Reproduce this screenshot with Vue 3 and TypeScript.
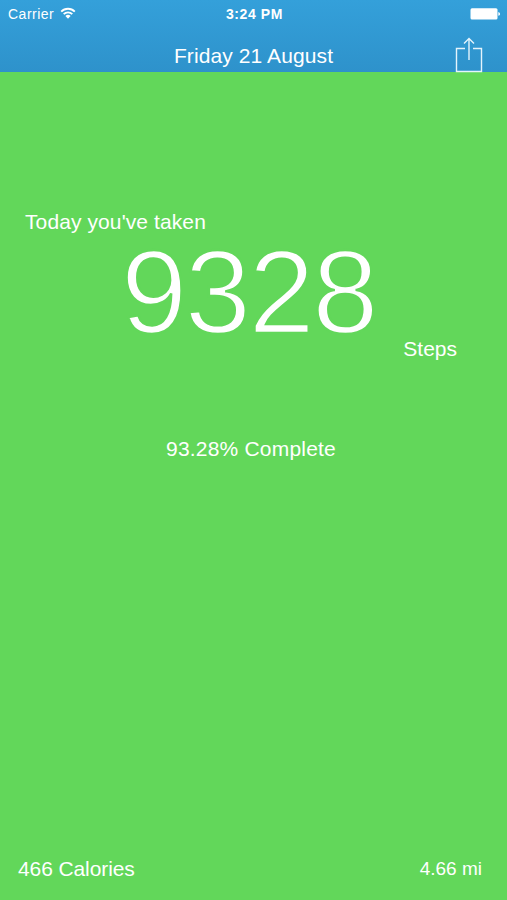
<script setup lang="ts">
const steps: number = 9328
const goal: number = 10000
const complete: string = ((steps / goal) * 100).toFixed(2)
</script>

<template>
  <main class="screen">
    <header class="header">
      <div class="status">
        <div class="carrier">
          <span>Carrier</span>
          <svg class="wifi" viewBox="0 0 16 12" width="16" height="12">
            <g fill="none" stroke="#fff" stroke-width="1.9">
              <path d="M1.2 4.6a9.6 9.6 0 0 1 13.6 0" />
              <path d="M3.7 7.1a6.1 6.1 0 0 1 8.6 0" />
            </g>
            <path d="M8 11.8 5.4 9a3.6 3.6 0 0 1 5.2 0z" fill="#fff" />
          </svg>
        </div>
        <span class="time">3:24 PM</span>
        <svg class="battery" viewBox="0 0 31 12" width="31" height="12">
          <rect x="0.5" y="0.2" width="27" height="11.4" rx="1.5" fill="#fff" />
          <path d="M28.3 4q1.8 .4 1.8 1.9t-1.8 1.9z" fill="#fff" />
        </svg>
      </div>
      <div class="nav">
        <h1 class="title">Friday 21 August</h1>
        <svg class="share" viewBox="0 0 28 36" width="28" height="36" fill="none" stroke="#e4f4fc" stroke-width="1.4">
          <path d="M10 11.5H1.5v23h25v-23H18" />
          <path d="M14 23V1.5M9 6.5l5-5 5 5" />
        </svg>
      </div>
    </header>
    <section class="body">
      <p class="intro">Today you've taken</p>
      <p class="count">{{ steps }}</p>
      <p class="unit">Steps</p>
      <p class="complete">{{ complete }}% Complete</p>
      <footer class="footer">
        <span class="calories">466 Calories</span>
        <span class="distance">4.66 mi</span>
      </footer>
    </section>
  </main>
</template>

<style>
body { margin: 0; }
</style>

<style scoped>
.screen { --green: #62d75a; width: 507px; height: 900px; display: flex; flex-direction: column; background: var(--green); color: #fff; font-family: "Liberation Sans", Arial, sans-serif; font-size: 21px; line-height: 26px; overflow: hidden; }
.header { height: 72px; box-sizing: border-box; background: linear-gradient(#34a0da, #2e92cb); }
.status { height: 28px; display: grid; grid-template-columns: 1fr auto 1fr; align-items: center; padding: 0 6px 0 8px; font-size: 14px; line-height: 28px; }
.carrier { display: flex; align-items: center; gap: 6px; letter-spacing: 0.5px; }
.wifi { margin-bottom: 2px; }
.time { font-weight: 700; letter-spacing: 0.6px; }
.battery { justify-self: end; }
.nav { height: 44px; display: grid; grid-template-columns: 1fr auto 1fr; padding: 0 24px; }
.title { grid-column: 2; margin: 0; padding-top: 15px; font-size: 21px; font-weight: 400; letter-spacing: 0.1px; }
.share { justify-self: end; margin-top: 9px; }
.body { flex: 1; display: flex; flex-direction: column; }
p { margin: 0; }
.intro { padding: 137px 25px 0; letter-spacing: 0.1px; }
/* The stroke takes the background colour to thin the numerals. */
.count { height: 101px; padding-right: 10px; text-align: center; font-size: 119px; line-height: 114px; letter-spacing: -2.4px; -webkit-text-stroke: 2.4px var(--green); }
.unit { padding-right: 50px; text-align: right; }
.complete { margin-top: 74px; padding-right: 5px; text-align: center; letter-spacing: 0.2px; }
.footer { margin-top: auto; display: flex; justify-content: space-between; padding: 0 25px 18px 18px; }
.calories { letter-spacing: -0.1px; }
.distance { font-size: 19px; }
</style>
